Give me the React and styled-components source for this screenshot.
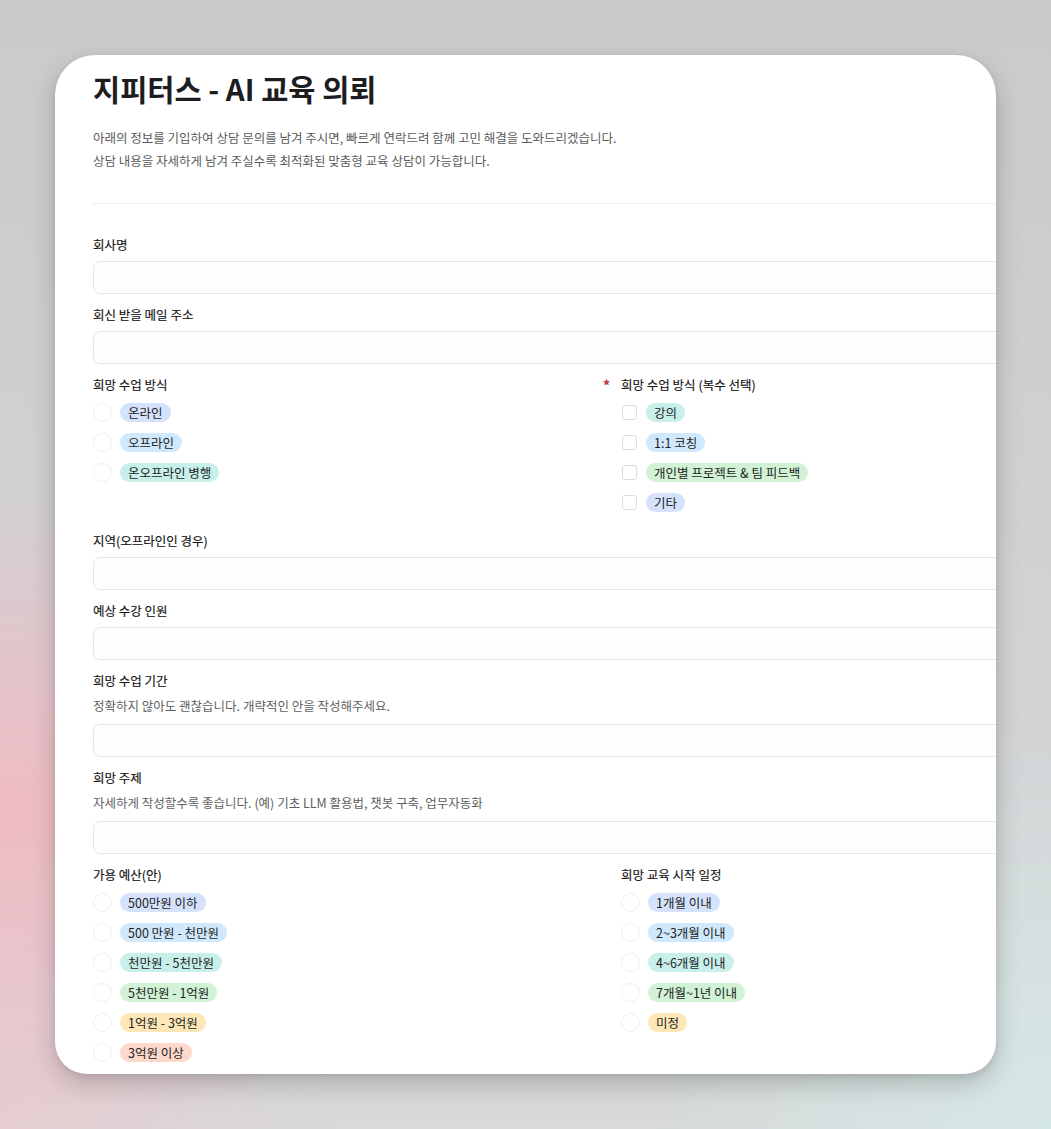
import React from "react";
import styled, { createGlobalStyle } from "styled-components";

const Global = createGlobalStyle`
  * { box-sizing: border-box; }
  html, body { margin: 0; padding: 0; }
  body {
    width: 1051px;
    height: 1129px;
    overflow: hidden;
    font-family: "Noto Sans CJK KR", "Noto Sans", sans-serif;
    color: #1f1f1f;
    background:
      radial-gradient(ellipse 55% 40% at 0% 72%, rgba(242, 186, 194, 0.95), rgba(242, 186, 194, 0) 75%),
      radial-gradient(ellipse 50% 45% at 100% 100%, rgba(214, 232, 230, 1), rgba(214, 232, 230, 0) 75%),
      radial-gradient(ellipse 40% 40% at 0% 100%, rgba(228, 206, 210, 1), rgba(228, 206, 210, 0) 80%),
      linear-gradient(180deg, #c9cacc 0%, #cfd1d3 45%, #d7d9da 100%);
  }
`;

const Page = styled.div`
  padding: 55px 0 0 55px;
`;

const Card = styled.div`
  width: 941px;
  height: 1019px;
  background: #ffffff;
  border-radius: 40px 40px 32px 32px;
  overflow: hidden;
  box-shadow: 0 10px 26px rgba(0, 0, 0, 0.2), 0 2px 6px rgba(0, 0, 0, 0.08);
  padding: 13px 0 0 38px;
`;

const Inner = styled.div`
  width: 1056px;
`;

const Title = styled.h1`
  margin: 0;
  font-size: 29.5px;
  line-height: 40px;
  font-weight: 700;
  color: #1d1d1f;
`;

const Intro = styled.div`
  margin-top: 18px;
  font-size: 12.5px;
  line-height: 23px;
  color: #5a5a5a;
`;

const Divider = styled.div`
  margin-top: 31px;
  height: 1px;
  background: #ededed;
`;

const Fields = styled.div`
  margin-top: 31px;
  display: flex;
  flex-direction: column;
  gap: 11px;
`;

const Field = styled.div`
  display: flex;
  flex-direction: column;
`;

const Label = styled.div`
  position: relative;
  font-size: 12.5px;
  line-height: 20px;
  font-weight: 400;
  color: #151515;
  -webkit-text-stroke: 0.15px #151515;
`;

const Required = styled.span`
  position: absolute;
  left: -18px;
  top: 0;
  color: #c8344d;
  font-size: 14px;
  font-weight: 700;
`;

const Hint = styled.div`
  margin-top: 5px;
  font-size: 12.5px;
  line-height: 20px;
  color: #5f5f5f;
`;

const Input = styled.div`
  margin-top: ${(p) => (p.$afterHint ? "8px" : "6px")};
  height: 33px;
  border: 1px solid #e6e6e6;
  border-radius: 7px;
  background: #fdfdfd;
`;

const Columns = styled.div`
  display: grid;
  grid-template-columns: 528px 528px;
  padding-bottom: 3px;
`;

const Options = styled.div`
  margin-top: 2px;
  display: flex;
  flex-direction: column;
`;

const Option = styled.div`
  height: 30px;
  display: flex;
  align-items: center;
  gap: ${(p) => (p.$check ? "9px" : "8px")};
`;

const Radio = styled.span`
  width: 19px;
  height: 19px;
  border-radius: 50%;
  border: 1px solid #efefef;
  background: #fff;
  box-shadow: inset 0 1px 1px rgba(0, 0, 0, 0.02);
  flex-shrink: 0;
`;

const Check = styled.span`
  width: 15px;
  height: 15px;
  margin-left: 1px;
  border-radius: 3px;
  border: 1px solid #dcdcdc;
  background: #fff;
  flex-shrink: 0;
`;

const tagColors = {
  blue: "#d5e2fb",
  sky: "#cfe8fb",
  teal: "#c8f0eb",
  green: "#d1f2d5",
  yellow: "#fde7b6",
  peach: "#fdd9cc",
};

const Tag = styled.span`
  display: inline-flex;
  align-items: center;
  height: 19px;
  padding: 0 8px;
  border-radius: 10px;
  background: ${(p) => tagColors[p.$color]};
  font-size: 12.5px;
  color: #1e1e1e;
  white-space: nowrap;
`;

function Choice({ check, color, children }) {
  return (
    <Option $check={check}>
      {check ? <Check /> : <Radio />}
      <Tag $color={color}>{children}</Tag>
    </Option>
  );
}

function TextField({ label, hint }) {
  return (
    <Field>
      <Label>{label}</Label>
      {hint && <Hint>{hint}</Hint>}
      <Input $afterHint={!!hint} />
    </Field>
  );
}

export default function App() {
  return (
    <>
      <Global />
      <Page>
        <Card>
          <Inner>
            <Title>지피터스 - AI 교육 의뢰</Title>
            <Intro>
              아래의 정보를 기입하여 상담 문의를 남겨 주시면, 빠르게 연락드려 함께 고민 해결을 도와드리겠습니다.
              <br />
              상담 내용을 자세하게 남겨 주실수록 최적화된 맞춤형 교육 상담이 가능합니다.
            </Intro>
            <Divider />
            <Fields>
              <TextField label="회사명" />
              <TextField label="회신 받을 메일 주소" />
              <Columns>
                <Field>
                  <Label>희망 수업 방식</Label>
                  <Options>
                    <Choice color="blue">온라인</Choice>
                    <Choice color="sky">오프라인</Choice>
                    <Choice color="teal">온오프라인 병행</Choice>
                  </Options>
                </Field>
                <Field>
                  <Label>
                    <Required>*</Required>
                    희망 수업 방식 (복수 선택)
                  </Label>
                  <Options>
                    <Choice check color="teal">강의</Choice>
                    <Choice check color="sky">1:1 코칭</Choice>
                    <Choice check color="green">개인별 프로젝트 &amp; 팀 피드백</Choice>
                    <Choice check color="blue">기타</Choice>
                  </Options>
                </Field>
              </Columns>
              <TextField label="지역(오프라인인 경우)" />
              <TextField label="예상 수강 인원" />
              <TextField
                label="희망 수업 기간"
                hint="정확하지 않아도 괜찮습니다. 개략적인 안을 작성해주세요."
              />
              <TextField
                label="희망 주제"
                hint="자세하게 작성할수록 좋습니다. (예) 기초 LLM 활용법, 챗봇 구축, 업무자동화"
              />
              <Columns>
                <Field>
                  <Label>가용 예산(안)</Label>
                  <Options>
                    <Choice color="blue">500만원 이하</Choice>
                    <Choice color="sky">500 만원 - 천만원</Choice>
                    <Choice color="teal">천만원 - 5천만원</Choice>
                    <Choice color="green">5천만원 - 1억원</Choice>
                    <Choice color="yellow">1억원 - 3억원</Choice>
                    <Choice color="peach">3억원 이상</Choice>
                  </Options>
                </Field>
                <Field>
                  <Label>희망 교육 시작 일정</Label>
                  <Options>
                    <Choice color="blue">1개월 이내</Choice>
                    <Choice color="sky">2~3개월 이내</Choice>
                    <Choice color="teal">4~6개월 이내</Choice>
                    <Choice color="green">7개월~1년 이내</Choice>
                    <Choice color="yellow">미정</Choice>
                  </Options>
                </Field>
              </Columns>
            </Fields>
          </Inner>
        </Card>
      </Page>
    </>
  );
}
